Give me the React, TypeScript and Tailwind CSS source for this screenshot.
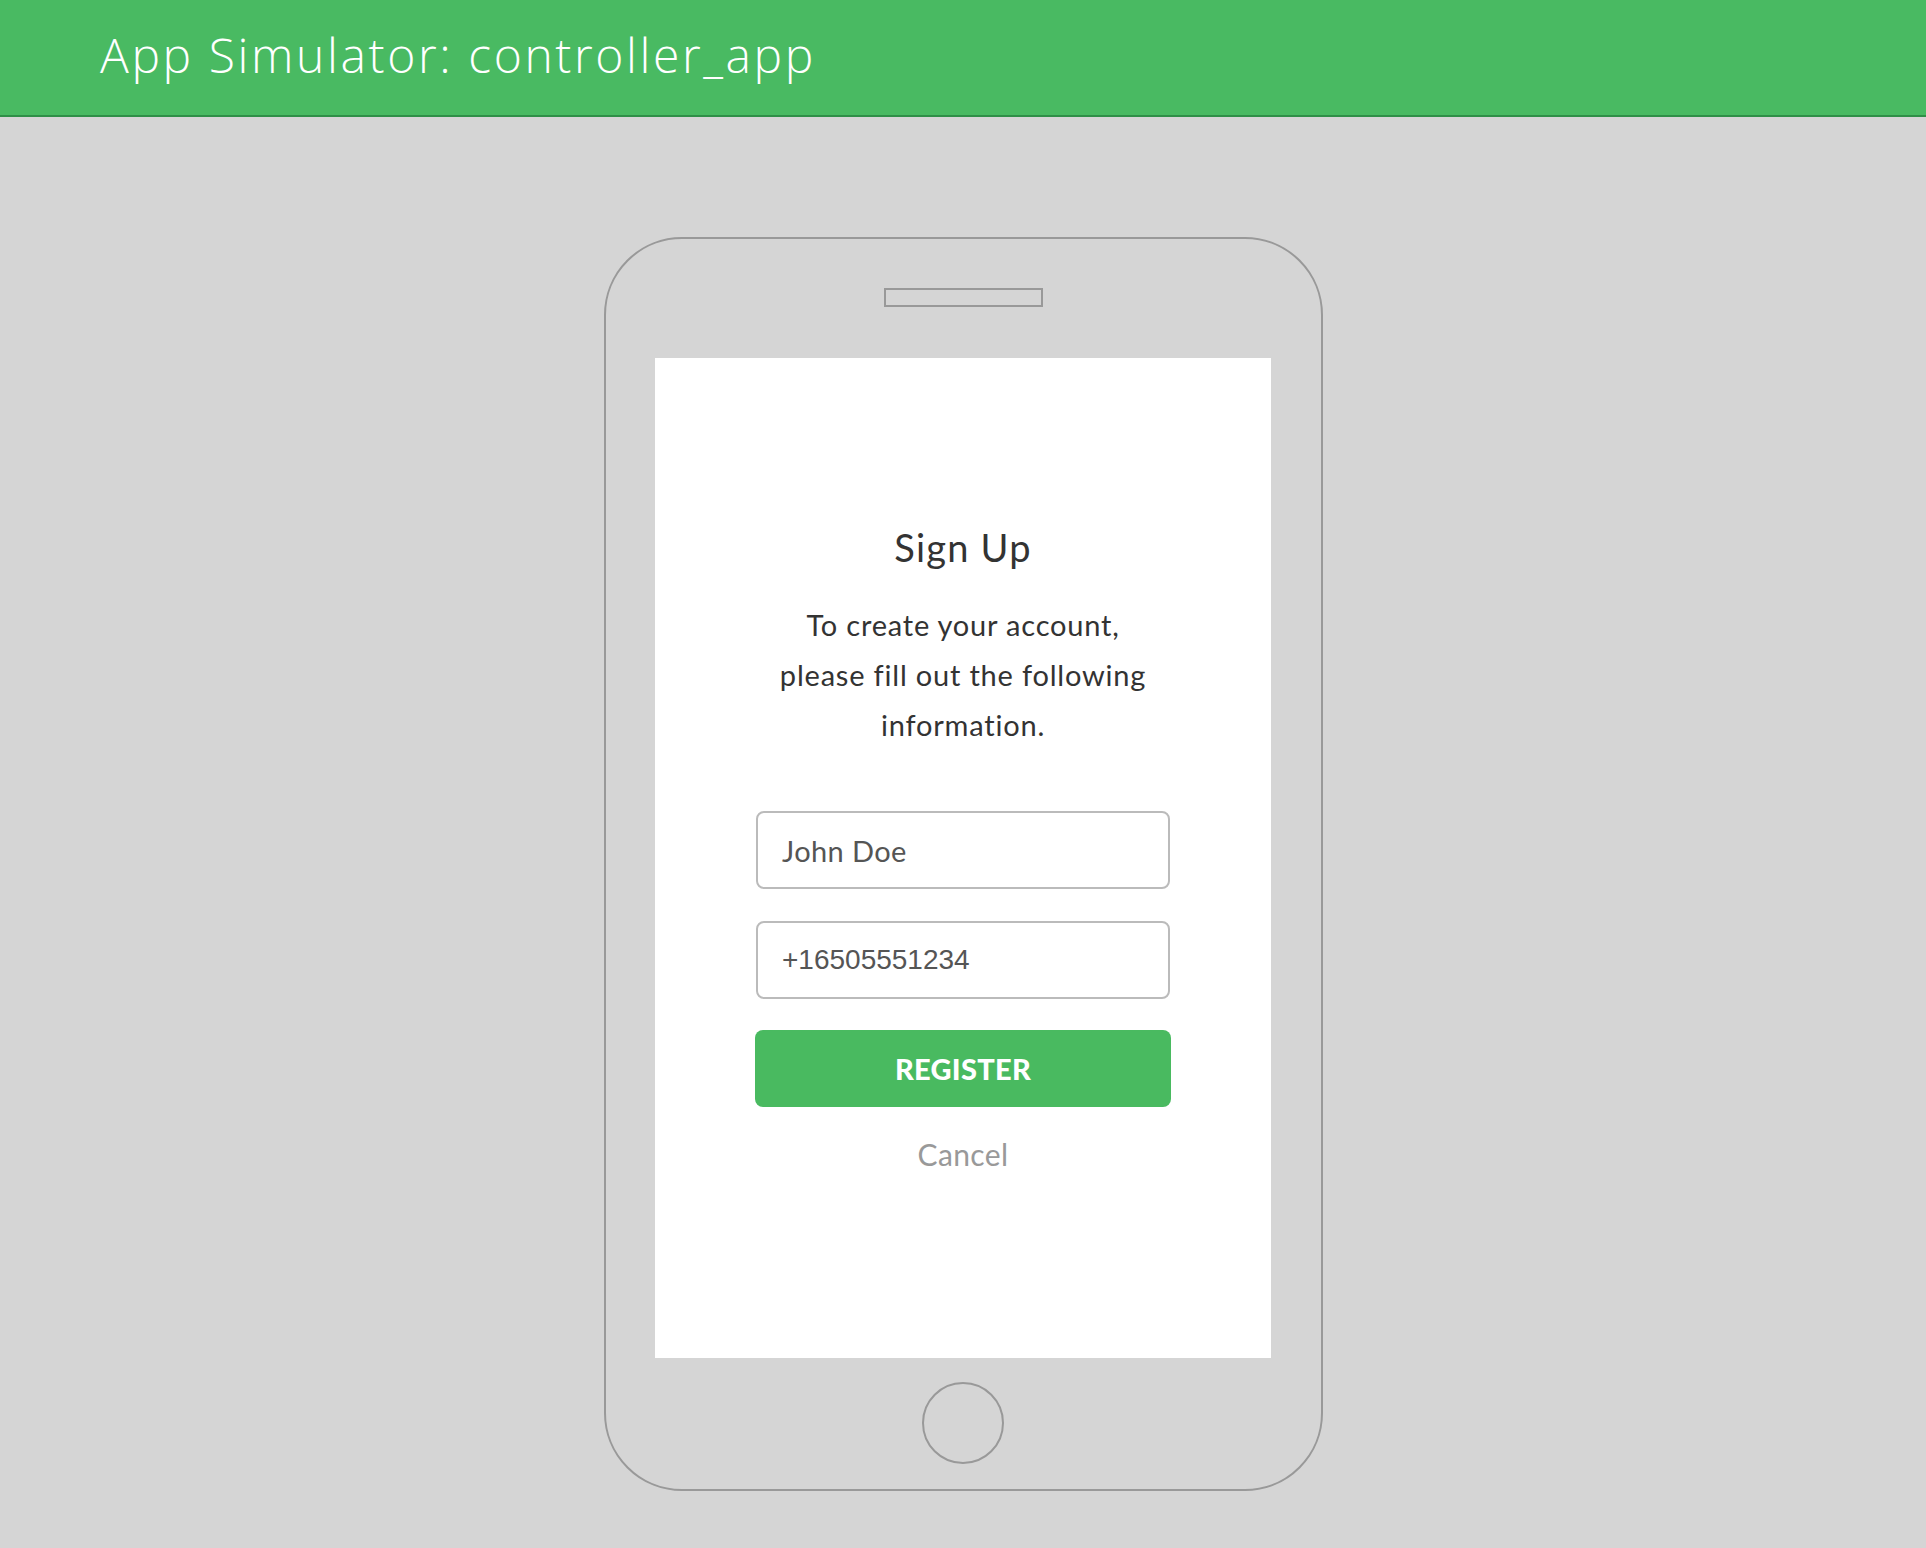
const App = () => {
  return (
    <div className="min-h-[1548px] w-full bg-[#d5d5d5] font-['Lato',sans-serif]">
      {/* Header */}
      <header className="h-[117px] bg-[#49ba62] border-b-2 border-[#2f8f47] flex items-center pl-[100px]">
        <h1 className="text-[48px] font-light leading-none text-white tracking-[2.6px] -mt-[6px] font-['Open_Sans',sans-serif]">
          App Simulator: controller_app
        </h1>
      </header>

      {/* Phone */}
      <div className="flex justify-center pt-[120px] pb-[57px]">
        <div className="w-[719px] h-[1254px] border-2 border-[#999999] rounded-[78px] flex flex-col items-center pt-[49px]">
          <div className="w-[159px] h-[19px] border-2 border-[#999999]"></div>

          <div className="mt-[51px] w-[616px] h-[1000px] bg-white flex flex-col items-center pt-[170px]">
            <h2 className="text-[38px] leading-[38px] text-[#333333] tracking-[1.2px]">
              Sign Up
            </h2>
            <p className="mt-[34px] text-[29px] leading-[50px] text-[#333333] text-center w-[400px] tracking-[0.8px]">
              To create your account,
              <br />
              please fill out the following
              <br />
              information.
            </p>

            <div className="mt-[61px] w-[414px] flex flex-col">
              <div className="h-[78px] border-2 border-[#bbbbbb] rounded-[8px] flex items-center pl-[24px]">
                <span className="text-[29px] text-[#555555] leading-none tracking-[0.4px]">John Doe</span>
              </div>
              <div className="mt-[32px] h-[78px] border-2 border-[#bbbbbb] rounded-[8px] flex items-center pl-[24px]">
                <span className="text-[28px] text-[#555555] leading-none font-['Liberation_Sans',sans-serif]">
                  +16505551234
                </span>
              </div>
              <button className="mt-[31px] h-[77px] w-[416px] -ml-[1px] bg-[#49ba60] rounded-[8px] text-white text-[29px] font-black leading-none tracking-[0.3px]">
                REGISTER
              </button>
            </div>

            <div className="mt-[32px] text-[30px] leading-[30px] text-[#999999] tracking-[0.4px]">Cancel</div>
          </div>

          <div className="mt-[24px] w-[82px] h-[82px] rounded-full border-2 border-[#999999]"></div>
        </div>
      </div>
    </div>
  );
};

export default App;
